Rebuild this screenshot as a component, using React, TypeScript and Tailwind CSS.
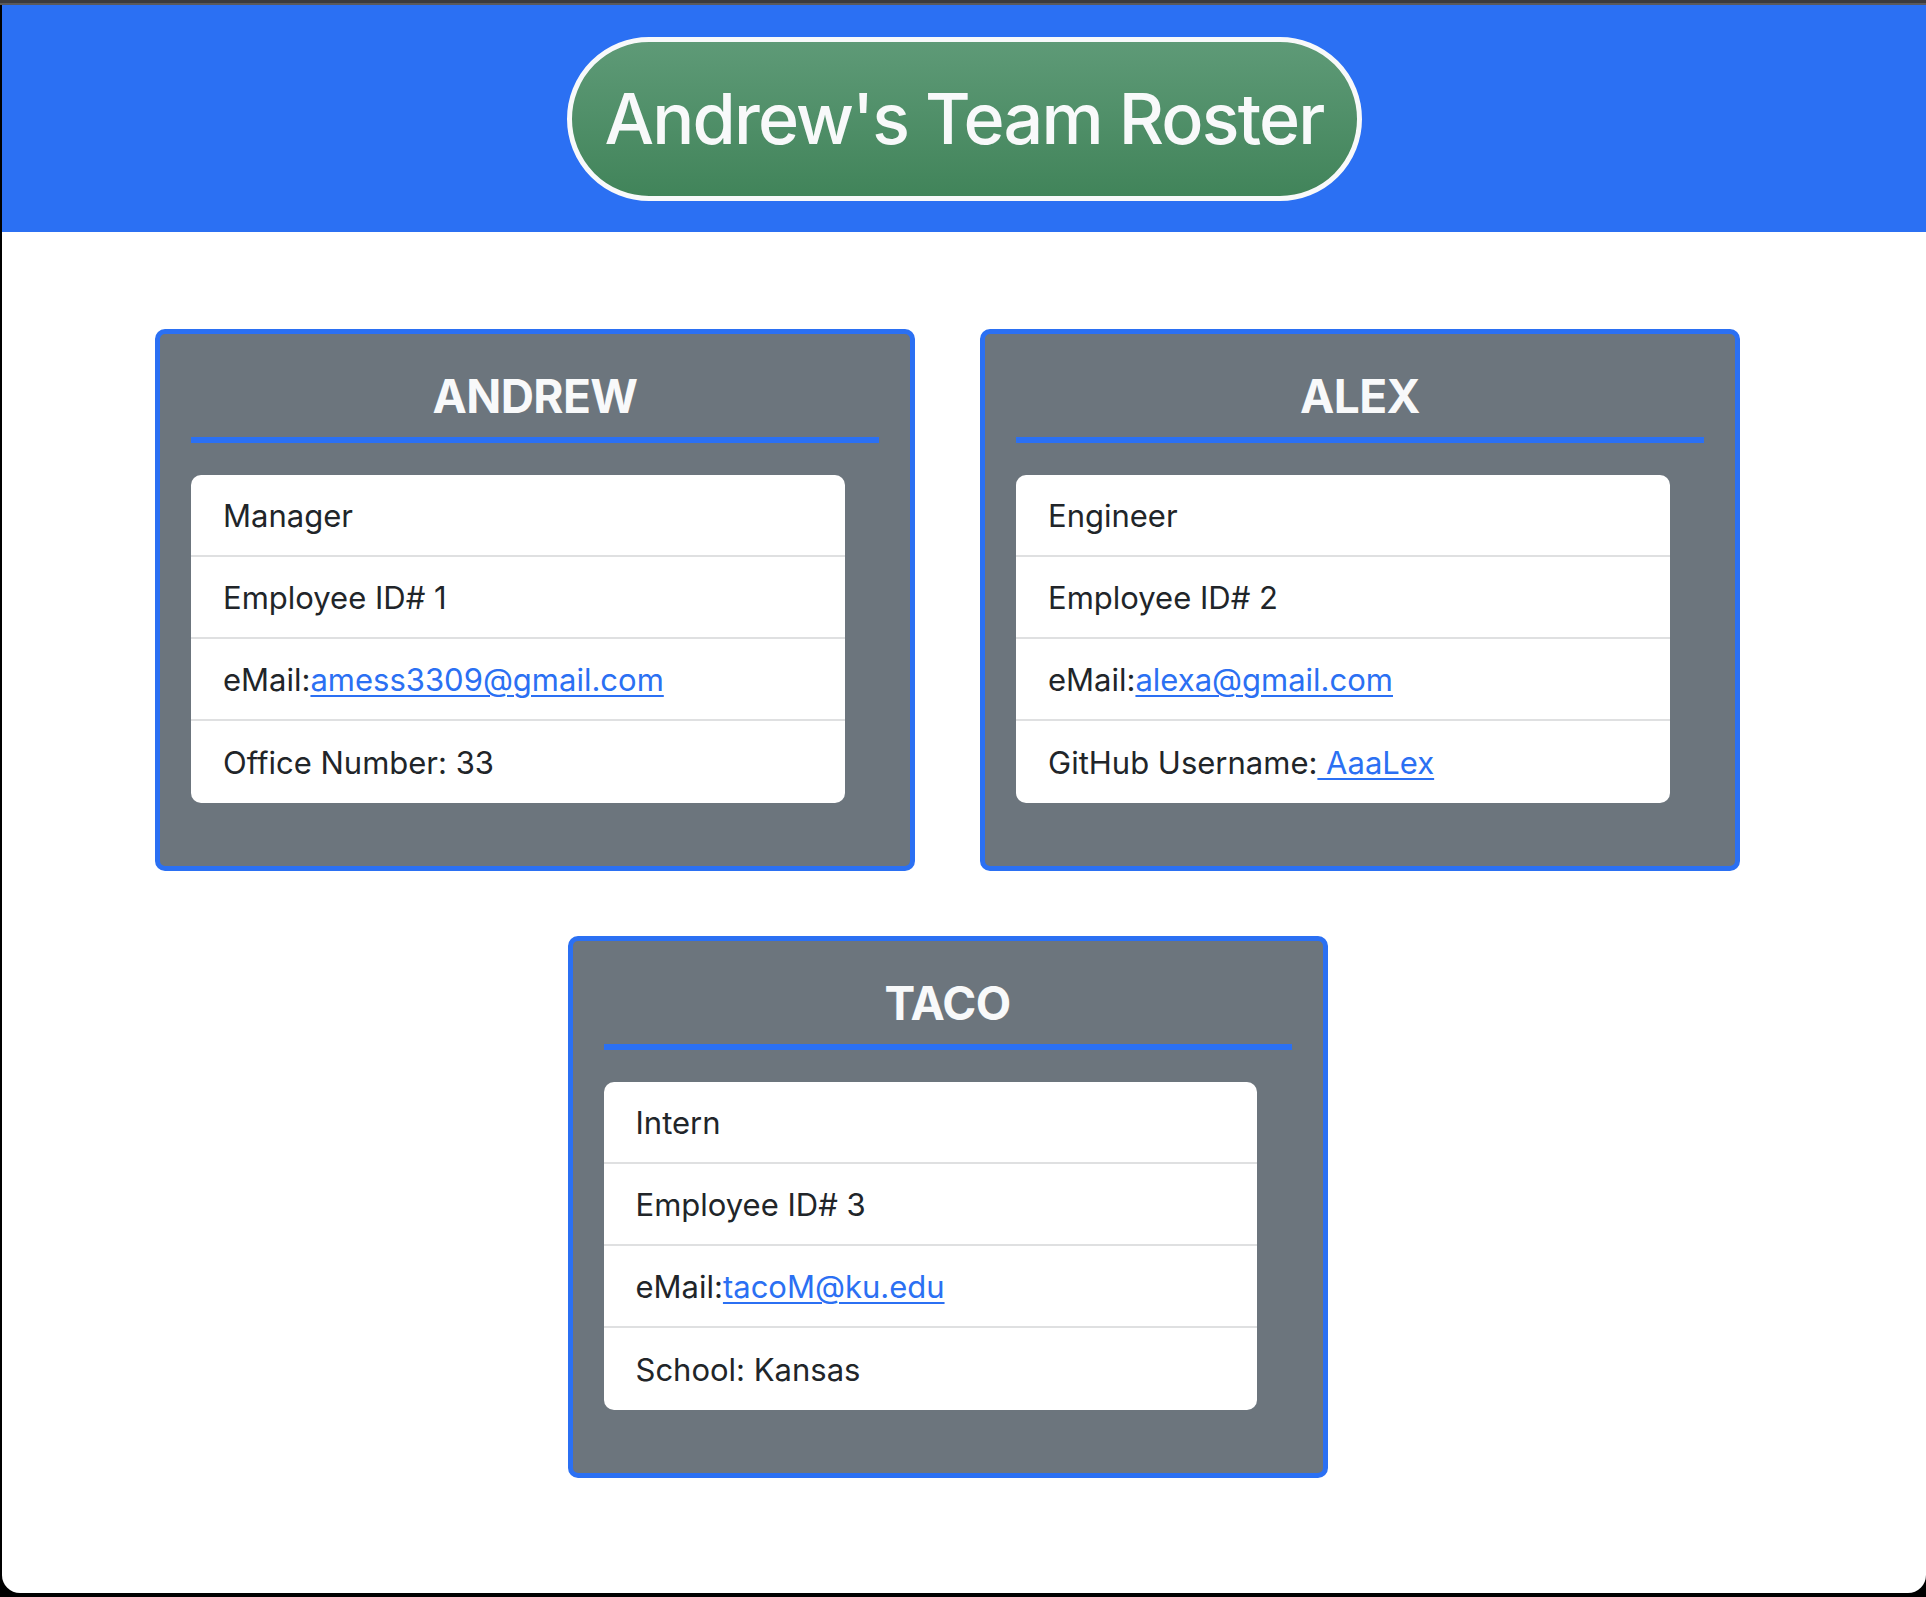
import React from 'react'

type Member = {
  name: string
  role: string
  id: number
  email: string
  extraLabel: string
  extraValue: string
  extraLink?: boolean
}

const team: Member[] = [
  { name: 'ANDREW', role: 'Manager', id: 1, email: 'amess3309@gmail.com', extraLabel: 'Office Number: ', extraValue: '33' },
  { name: 'ALEX', role: 'Engineer', id: 2, email: 'alexa@gmail.com', extraLabel: 'GitHub Username:', extraValue: ' AaaLex', extraLink: true },
  { name: 'TACO', role: 'Intern', id: 3, email: 'tacoM@ku.edu', extraLabel: 'School: ', extraValue: 'Kansas' },
]

const Row: React.FC<{ children: React.ReactNode; last?: boolean }> = ({ children, last }) => (
  <li className={`h-[82px] flex items-center px-[32px] pt-[3px] ${last ? '' : 'border-b-2 border-[#dfe0e1]'}`}>
    {children}
  </li>
)

const Card: React.FC<{ m: Member; className?: string }> = ({ m, className }) => (
  <div className={`w-[760px] h-[542px] bg-[#6c757d] border-[5px] border-[#2b70f3] rounded-[10px] px-[31px] pt-[33px] ${className ?? ''}`}>
    <h4 className="text-center text-[46px] leading-[58px] font-bold tracking-[-0.6px] text-[#f8f9fa] mb-[12px]">{m.name}</h4>
    <div className="h-[6px] bg-[#2b70f3] mb-[32px]" />
    <ul className="w-[95%] bg-white rounded-[10px] text-[31px] text-[#212529]">
      <Row>{m.role}</Row>
      <Row>Employee ID# {m.id}</Row>
      <Row>
        eMail:<a href="#" className="text-[#2b70f3] underline underline-offset-[4px] decoration-2">{m.email}</a>
      </Row>
      <Row last>
        {m.extraLink ? (
          <span className="whitespace-pre">
            {m.extraLabel}
            <a href="#" className="text-[#2b70f3] underline underline-offset-[4px] decoration-2">{m.extraValue}</a>
          </span>
        ) : (
          <span className="whitespace-pre">{m.extraLabel}{m.extraValue}</span>
        )}
      </Row>
    </ul>
  </div>
)

const App: React.FC = () => {
  return (
    <div className="h-[1597px] bg-black overflow-hidden" style={{ fontFamily: 'Inter, "Noto Sans", sans-serif' }}>
      <div className="h-[3px] bg-[#3b3b3d]" />
      <div className="h-[2px] bg-[#5a5a5c]" />
      <div className="ml-[2px] h-[1588px] bg-white rounded-b-[18px] overflow-hidden">
        <header className="h-[227px] bg-[#2b70f3] flex items-center justify-center">
          <h1 className="h-[164px] w-[795px] rounded-full border-[5px] border-[#f8f9fa] bg-gradient-to-b from-[#5e9a77] to-[#41845a] flex items-center justify-center text-[#f8f9fa] text-[70px] font-medium tracking-[-1.8px]">
            Andrew's Team Roster
          </h1>
        </header>
        <main className="pt-[97px] pl-[153px]">
          <div className="grid grid-cols-[760px_760px] gap-[65px] w-[1585px]">
            <Card m={team[0]} />
            <Card m={team[1]} />
            <Card m={team[2]} className="col-span-2 justify-self-center" />
          </div>
        </main>
      </div>
    </div>
  )
}

export default App
